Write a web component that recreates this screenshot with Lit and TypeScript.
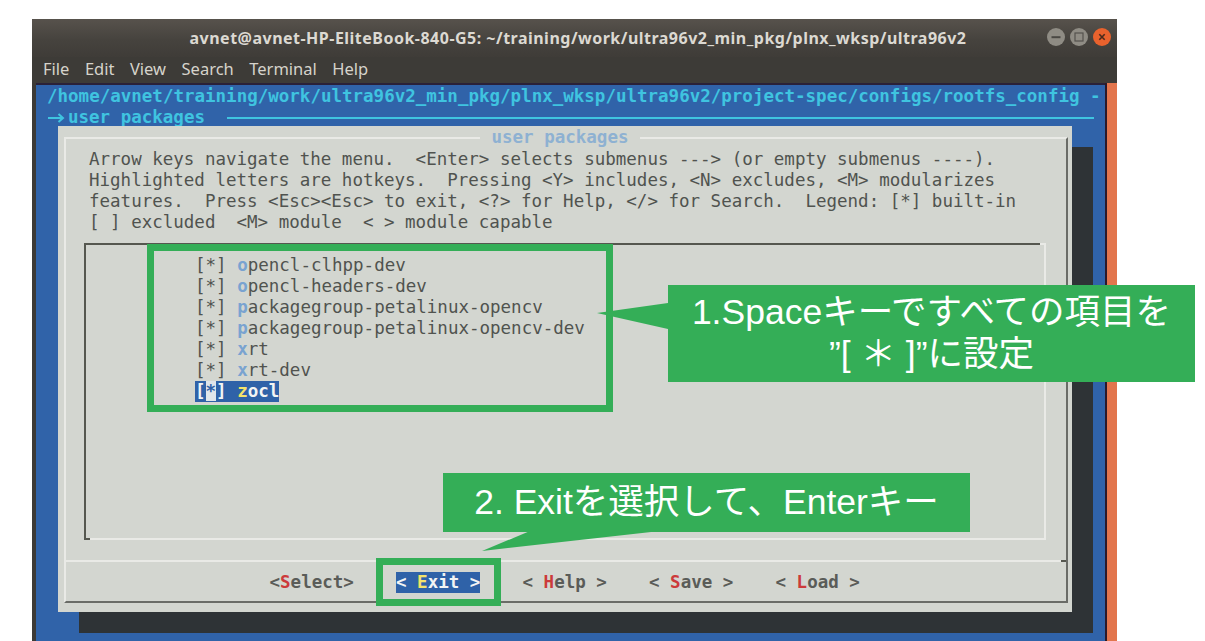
import { LitElement, html, css, svg } from "lit";
import { customElement } from "lit/decorators.js";

const items: [string, string][] = [
  ["o", "pencl-clhpp-dev"],
  ["o", "pencl-headers-dev"],
  ["p", "ackagegroup-petalinux-opencv"],
  ["p", "ackagegroup-petalinux-opencv-dev"],
  ["x", "rt"],
  ["x", "rt-dev"],
];

const intro = [
  "Arrow keys navigate the menu.  <Enter> selects submenus ---> (or empty submenus ----).",
  "Highlighted letters are hotkeys.  Pressing <Y> includes, <N> excludes, <M> modularizes",
  "features.  Press <Esc><Esc> to exit, <?> for Help, </> for Search.  Legend: [*] built-in",
  "[ ] excluded  <M> module  < > module capable",
];

const buttons: [string, string, string][] = [
  ["<", "S", "elect>"],
  ["< ", "E", "xit >"],
  ["< ", "H", "elp >"],
  ["< ", "S", "ave >"],
  ["< ", "L", "oad >"],
];

@customElement("app-root")
export class AppRoot extends LitElement {
  static styles = css`
    :host {
      display: block;
      position: relative;
      width: 1205px;
      height: 641px;
      overflow: hidden;
      background: #fff;
    }
    .window {
      position: absolute;
      left: 32px;
      top: 19px;
      width: 1085px;
      height: 622px;
      display: flex;
      flex-direction: column;
      background: #3c3a36;
    }
    .titlebar {
      height: 38px;
      flex: none;
      display: flex;
      align-items: center;
      justify-content: center;
      padding: 0 0 1px 7px;
      box-sizing: border-box;
      background: linear-gradient(#57524c, #46433e 55%, #3f3c38);
      color: #dcd9d2;
      font: 700 16px "Noto Sans", sans-serif;
      letter-spacing: 0.49px;
      position: relative;
    }
    .controls {
      position: absolute;
      left: 1015px;
      top: 8px;
      display: flex;
      gap: 5px;
    }
    .controls svg {
      display: block;
      width: 18px;
      height: 20px;
    }
    .menubar {
      height: 26px;
      flex: none;
      display: flex;
      align-items: center;
      padding: 0 0 3px 11px;
      gap: 15.5px;
      box-sizing: border-box;
      background: #3d3b37;
      color: #d6d3cb;
      font: 400 16.5px "Noto Sans", sans-serif;
    }
    .term {
      flex: 1;
      display: flex;
      padding-left: 4px;
      min-height: 0;
    }
    .screen {
      width: 1069px;
      flex: none;
      box-sizing: border-box;
      background: #3063a9;
      border-top: 2px solid #2a2138;
      padding: 1px 0 0 11px;
      font: 400 17.5px/21px "DejaVu Sans Mono", monospace;
      overflow: hidden;
    }
    .sep {
      width: 2px;
      flex: none;
      background: #2a1a2a;
    }
    .orange {
      flex: 1;
      background: #e2754d;
    }
    .head {
      height: 40px;
      color: #3fc4e0;
      font-weight: 700;
    }
    .path {
      white-space: pre;
    }
    .crumb {
      display: flex;
      align-items: center;
      white-space: pre;
    }
    .crumb svg {
      display: block;
      width: 21px;
      height: 12px;
      flex: none;
    }
    .rule {
      width: 867px;
      height: 2px;
      margin-left: 22px;
      background: #3fc4e0;
    }
    .dialog {
      position: relative;
      width: 1014px;
      height: 486px;
      margin-left: 11px;
      box-sizing: border-box;
      padding: 11px 4px 9px 6px;
      background: #d3d6d0;
      box-shadow: 21px 21px 0 #2e3336;
      color: #50534f;
    }
    .frame {
      position: relative;
      box-sizing: border-box;
      height: 100%;
      display: flex;
      flex-direction: column;
      border: 2px solid;
      border-color: #e9eae6 #6a6c67 #6a6c67 #e9eae6;
    }
    .frame::after {
      content: "";
      position: absolute;
      right: 0;
      top: 421px;
      width: 5px;
      height: 2px;
      background: #55574f;
    }
    .title {
      position: absolute;
      left: 414px;
      top: -12px;
      width: 160px;
      text-align: center;
      background: #d3d6d0;
      color: #8eb1d2;
      font-weight: 700;
    }
    .intro {
      padding: 10px 0 0 23px;
      height: 84px;
      flex: none;
    }
    .list {
      position: relative;
      flex: none;
      height: 297px;
      box-sizing: border-box;
      margin: 10px 20px 0 18px;
      padding: 10px 0 0 109px;
      border: 2px solid;
      border-color: #55574f #e9eae6 #e9eae6 #55574f;
    }
    .list::before {
      content: "";
      position: absolute;
      right: -2px;
      top: -2px;
      width: 6px;
      height: 2px;
      background: #e9eae6;
    }
    .list::after {
      content: "";
      position: absolute;
      left: -2px;
      bottom: -2px;
      width: 6px;
      height: 2px;
      background: #55574f;
    }
    .row {
      height: 21px;
      white-space: pre;
    }
    .hot {
      color: #79a3d0;
      font-weight: 700;
    }
    .sel {
      display: inline-block;
      background: #2f62a8;
      color: #f2f4f4;
      font-weight: 700;
    }
    .sel .cur {
      background: #dfe5ea;
      color: #2f62a8;
    }
    .sel .key {
      color: #f3e36b;
    }
    .bar {
      flex: 1;
      margin-top: 20px;
      border-top: 2px solid #e9eae6;
      display: flex;
      align-items: center;
      gap: 42.2px;
      padding: 1px 0 0 203.5px;
      font-weight: 700;
      color: #5a5c58;
      white-space: pre;
    }
    .btn b {
      color: #cc3a3a;
    }
    .btn.on {
      background: #2f62a8;
      color: #f2f4f4;
    }
    .btn.on b {
      color: #f3e36b;
    }
    .mark {
      position: absolute;
      box-sizing: border-box;
      border: 7px solid #34ae57;
    }
    .mark.items {
      left: 147px;
      top: 244px;
      width: 466px;
      height: 168px;
    }
    .mark.exit {
      left: 376px;
      top: 558px;
      width: 125px;
      height: 48px;
    }
    .note {
      position: absolute;
      box-sizing: border-box;
      padding-bottom: 2px;
      display: flex;
      flex-direction: column;
      align-items: center;
      justify-content: center;
      background: #34ae57;
      color: #fff;
      font: 400 35.5px/42px "Liberation Sans", "Noto Sans CJK JP", sans-serif;
      white-space: nowrap;
    }
    .note.one {
      left: 668px;
      top: 285px;
      width: 527px;
      height: 97px;
    }
    .note.two {
      left: 443px;
      top: 473px;
      width: 527px;
      height: 59px;
    }
    .tails {
      position: absolute;
      left: 0;
      top: 0;
      width: 1205px;
      height: 641px;
      pointer-events: none;
    }
  `;

  render() {
    return html`
      <div class="window">
        <div class="titlebar">
          avnet@avnet-HP-EliteBook-840-G5: ~/training/work/ultra96v2_min_pkg/plnx_wksp/ultra96v2
          <div class="controls">
            <svg viewBox="0 0 18 20">
              <circle cx="9" cy="10" r="9" fill="#8f8c84" />
              <path d="M4.5 10.2h9" stroke="#4a4843" stroke-width="2" />
            </svg>
            <svg viewBox="0 0 18 20">
              <circle cx="9" cy="10" r="9" fill="#8f8c84" />
              <rect x="5" y="6" width="8" height="8" fill="none" stroke="#55534e" stroke-width="1.2" />
            </svg>
            <svg viewBox="0 0 18 20">
              <circle cx="9" cy="10" r="9" fill="#e9622d" />
              <path d="M6.3 7.3l5.4 5.4M11.7 7.3l-5.4 5.4" stroke="#4a2a1c" stroke-width="1.6" />
            </svg>
          </div>
        </div>
        <div class="menubar">
          <span>File</span><span>Edit</span><span>View</span><span>Search</span><span>Terminal</span><span>Help</span>
        </div>
        <div class="term">
          <div class="screen">
            <div class="head">
              <div class="path">/home/avnet/training/work/ultra96v2_min_pkg/plnx_wksp/ultra96v2/project-spec/configs/rootfs_config -</div>
              <div class="crumb"><svg viewBox="0 0 21 12"><path d="M1 6h15M11.5 2l4.5 4-4.5 4" fill="none" stroke="#3fc4e0" stroke-width="2" /></svg><span>user packages</span><span class="rule"></span></div>
            </div>
            <div class="dialog">
              <div class="frame">
                <div class="title">user packages</div>
                <div class="intro">${intro.map((l) => html`<div class="row">${l}</div>`)}</div>
                <div class="list">
                  ${items.map(
                    ([k, r]) => html`<div class="row">[*] <span class="hot">${k}</span>${r}</div>`
                  )}
                  <div class="row"><span class="sel">[<span class="cur">*</span>] <span class="key">z</span>ocl</span></div>
                </div>
                <div class="bar">
                  ${buttons.map(
                    ([a, k, r], i) =>
                      html`<span class="btn ${i === 1 ? "on" : ""}">${a}<b>${k}</b>${r}</span>`
                  )}
                </div>
              </div>
            </div>
          </div>
          <div class="sep"></div>
          <div class="orange"></div>
        </div>
      </div>

      <div class="mark items"></div>
      <div class="mark exit"></div>
      <svg class="tails" viewBox="0 0 1205 641">
        ${svg`<polygon points="668,303 597,313 668,329" fill="#34ae57" />`}
        ${svg`<polygon points="530,531 482,551 660,531" fill="#34ae57" />`}
      </svg>
      <div class="note one">
        <div>1.Spaceキーですべての項目を</div>
        <div>”[ ＊ ]”に設定</div>
      </div>
      <div class="note two"><div>2. Exitを選択して、Enterキー</div></div>
    `;
  }
}
